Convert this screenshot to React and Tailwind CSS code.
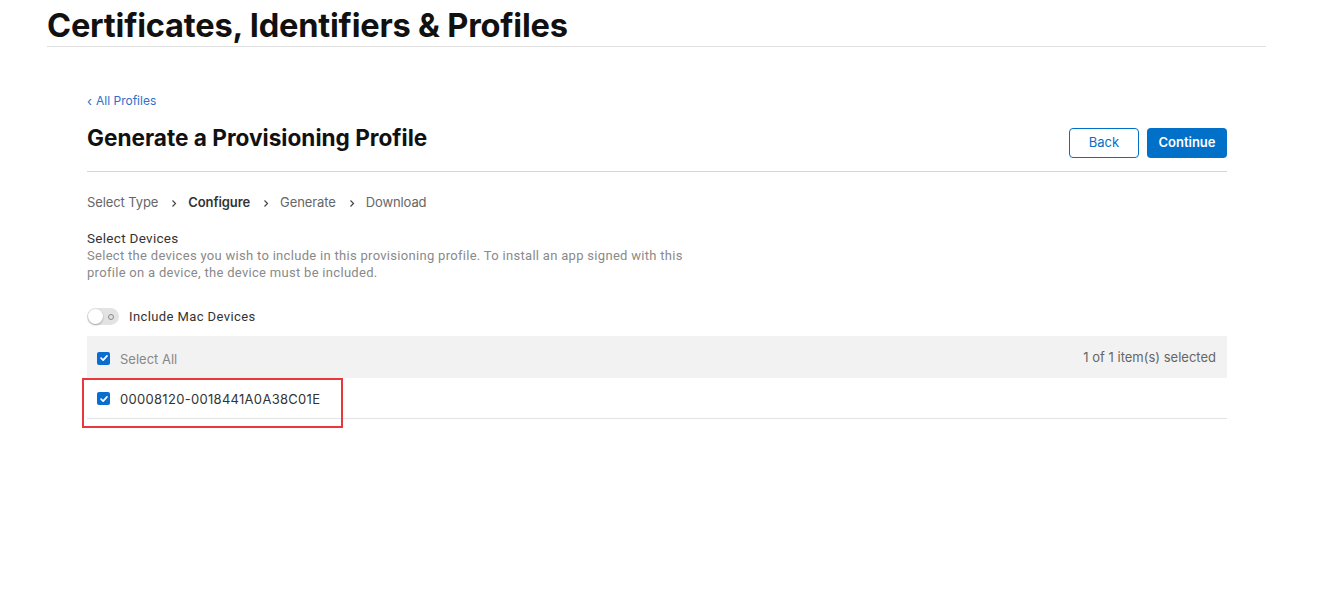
import React from 'react';

const Check = () => (
  <span className="flex h-[13px] w-[13px] items-center justify-center rounded-[2px] bg-[#0a6ed1]">
    <svg viewBox="0 0 12 12" className="h-[10px] w-[10px]" fill="none" stroke="white" strokeWidth="2" strokeLinecap="round" strokeLinejoin="round">
      <path d="M2.5 6.2 5 8.6 9.6 3.4" />
    </svg>
  </span>
);

const Chevron = () => (
  <svg viewBox="0 0 8 12" className="ml-[13px] mr-[11px] mt-[3px] h-[9px] w-[6px]" fill="none" stroke="#444" strokeWidth="1.6">
    <path d="M2 2l4 4-4 4" />
  </svg>
);

export default function App() {
  return (
    <div className="min-h-[591px] bg-white font-['Inter',sans-serif] text-[#1d1d1f]">
      <div className="ml-[47px] w-[1219px] border-b border-[#e0e0e0] pb-[2px] pt-[6px]">
        <h1 className="text-[32.6px] font-bold leading-[38px] tracking-[-0.2px] text-[#111]">Certificates, Identifiers &amp; Profiles</h1>
      </div>

      <div className="mx-[87px] w-[1140px] pt-[46px]">
        <a className="flex items-center gap-[4px] text-[12px] leading-[16px] text-[#2f6fc9]">
          <span className="text-[13px]">‹</span>All Profiles
        </a>

        <div className="mt-[10px] flex items-start justify-between border-b border-[#d6d6d6] pb-[13px]">
          <h2 className="pt-[4px] pb-[3px] text-[22.6px] font-bold leading-[30px] text-[#111]">Generate a Provisioning Profile</h2>
          <div className="mt-[9px] flex gap-[8px]">
            <button className="h-[30px] w-[70px] rounded-[4px] border border-[#0070c9] pb-[1px] text-[13px] text-[#0070c9]">Back</button>
            <button className="h-[30px] w-[80px] rounded-[4px] bg-[#0070c9] pb-[1px] text-[13px] font-semibold text-white">Continue</button>
          </div>
        </div>

        <div className="mt-[21px] flex items-center text-[13px] leading-[18px] tracking-[-0.1px] text-[#666]">
          <span>Select Type</span>
          <Chevron />
          <span className="font-semibold text-[#333]">Configure</span>
          <Chevron />
          <span>Generate</span>
          <Chevron />
          <span>Download</span>
        </div>

        <div className="mt-[19px] font-['Roboto',sans-serif] text-[13px] leading-[17px] tracking-[0.3px]">
          <p className="text-[13.5px] text-[#333]">Select Devices</p>
          <p className="w-[620px] text-[#8a8a8a]">
            Select the devices you wish to include in this provisioning profile. To install an app signed with this profile on a device, the device must be included.
          </p>
        </div>

        <div className="mt-[26px] flex items-center gap-[10px] font-['Roboto',sans-serif] text-[13px] tracking-[0.4px] text-[#333]">
          <span className="relative flex h-[17px] w-[32px] items-center rounded-full bg-[#e3e3e3]">
            <span className="absolute left-[1px] h-[15px] w-[15px] rounded-full bg-white shadow-[0_1px_2px_rgba(0,0,0,0.3)]" />
            <span className="absolute right-[5px] h-[6px] w-[6px] rounded-full border border-[#888]" />
          </span>
          Include Mac Devices
        </div>

        <div className="mt-[9px] flex h-[42px] items-center justify-between bg-[#f2f2f2] pl-[10px] pr-[11px] pt-[3px] text-[13px]">
          <div className="flex items-center gap-[10px]">
            <Check />
            <span className="mt-[3px] text-[#888]">Select All</span>
          </div>
          <span className="text-[13px] text-[#666]">1 of 1 item(s) selected</span>
        </div>

        <div className="relative flex h-[41px] items-center gap-[10px] border-b border-[#e3e3e3] pl-[10px] pt-[2px] text-[13px] text-[#333]">
          <Check />
          <span className="mt-[2px] tracking-[0.3px]">00008120-0018441A0A38C01E</span>
          <div className="absolute left-[-5px] top-0 h-[50px] w-[261px] border-2 border-[#e8383b]" />
        </div>
      </div>
    </div>
  );
}
